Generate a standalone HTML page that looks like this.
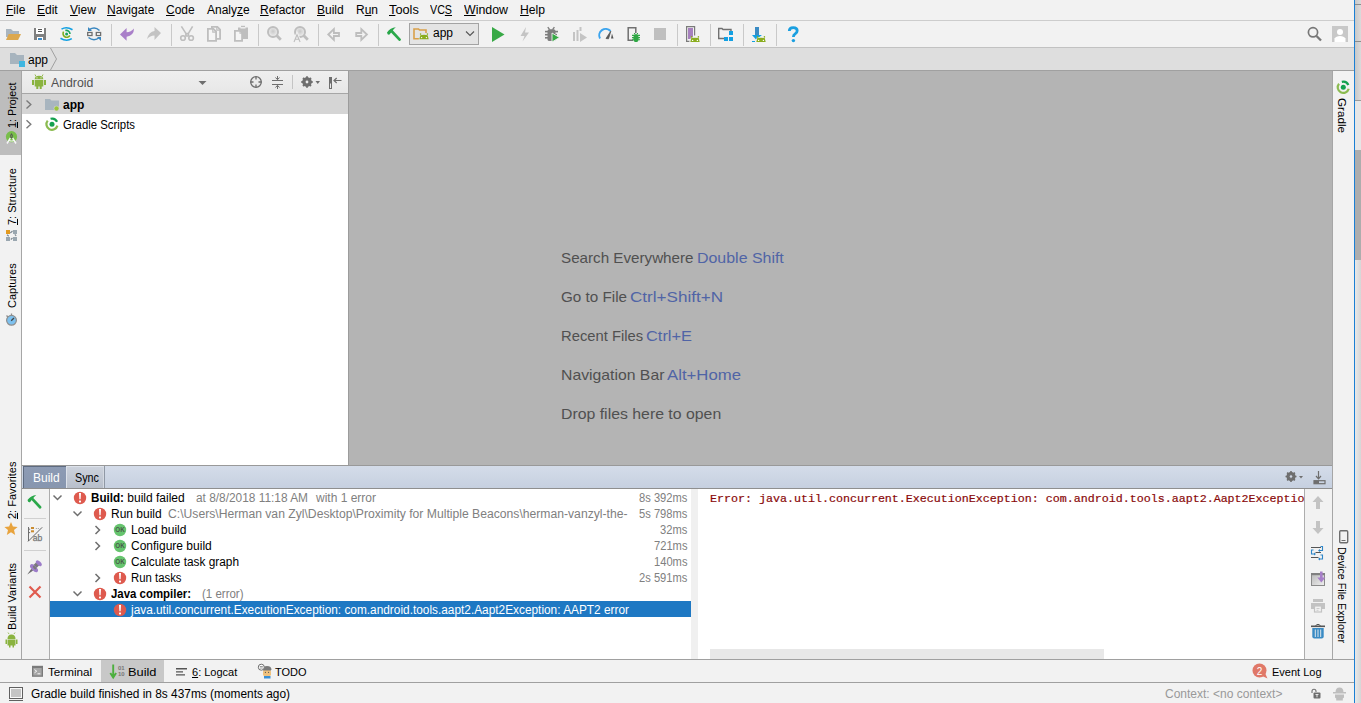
<!DOCTYPE html>
<html><head><meta charset="utf-8">
<style>
*{box-sizing:border-box}
html,body{margin:0;padding:0;width:1361px;height:703px;overflow:hidden;background:#F2F2F2;font-family:"Liberation Sans",sans-serif;font-size:12px;color:#000;position:relative}
.a{position:absolute}
.t{position:absolute;white-space:pre;line-height:12px;font-size:12px}
u{text-decoration:underline;text-underline-offset:1px;text-decoration-thickness:1px}
svg{position:absolute;overflow:visible}
</style></head><body>
<div class="a" style="left:1355px;top:0px;width:6px;height:703px;background:linear-gradient(90deg,#C8C8C8,#DADADA);"></div>
<div class="a" style="left:1355px;top:4px;width:6px;height:1px;background:#8C8C8C;"></div>
<div class="a" style="left:1355px;top:41px;width:6px;height:1px;background:#8C8C8C;"></div>
<div class="a" style="left:1355px;top:100px;width:6px;height:1px;background:#9A9A9A;"></div>
<div class="a" style="left:1355px;top:101px;width:6px;height:49px;background:#E6E6E6;"></div>
<div class="a" style="left:1355px;top:150px;width:6px;height:110px;background:#ADADAD;"></div>
<div class="a" style="left:1355px;top:260px;width:6px;height:443px;background:linear-gradient(90deg,#E8E8E8,#D6D6D6);"></div>
<div class="a" style="left:1354px;top:0px;width:1px;height:703px;background:#1A7FD4;"></div>
<div class="a" style="left:0px;top:20px;width:1354px;height:1px;background:#CDCDCD;"></div>
<span class="t" style="left:6px;top:3.84px;font-size:12px;line-height:12px;"><u>F</u>ile</span>
<span class="t" style="left:37px;top:3.84px;font-size:12px;line-height:12px;"><u>E</u>dit</span>
<span class="t" style="left:70px;top:3.84px;font-size:12px;line-height:12px;"><u>V</u>iew</span>
<span class="t" style="left:107px;top:3.84px;font-size:12px;line-height:12px;"><u>N</u>avigate</span>
<span class="t" style="left:166px;top:3.84px;font-size:12px;line-height:12px;"><u>C</u>ode</span>
<span class="t" style="left:207px;top:3.84px;font-size:12px;line-height:12px;">Analy<u>z</u>e</span>
<span class="t" style="left:260px;top:3.84px;font-size:12px;line-height:12px;"><u>R</u>efactor</span>
<span class="t" style="left:317px;top:3.84px;font-size:12px;line-height:12px;"><u>B</u>uild</span>
<span class="t" style="left:356px;top:3.84px;font-size:12px;line-height:12px;">R<u>u</u>n</span>
<span class="t" style="left:389px;top:3.84px;font-size:12px;line-height:12px;transform:scaleX(1.0638);transform-origin:0 0;"><u>T</u>ools</span>
<span class="t" style="left:430px;top:3.84px;font-size:12px;line-height:12px;transform:scaleX(0.8916);transform-origin:0 0;">VC<u>S</u></span>
<span class="t" style="left:463.5px;top:3.84px;font-size:12px;line-height:12px;transform:scaleX(1.0309);transform-origin:0 0;"><u>W</u>indow</span>
<span class="t" style="left:520px;top:3.84px;font-size:12px;line-height:12px;transform:scaleX(1.0130);transform-origin:0 0;"><u>H</u>elp</span>
<div class="a" style="left:0px;top:47px;width:1354px;height:1px;background:#C2C2C2;"></div>
<svg width="1361" height="703" style="left:0;top:0" viewBox="0 0 1361 703">
<g id="tb">
 <!-- separators -->
 <g fill="#C9C9C9">
  <rect x="111" y="24" width="1" height="22"/><rect x="171" y="24" width="1" height="22"/>
  <rect x="258" y="24" width="1" height="22"/><rect x="318" y="24" width="1" height="22"/>
  <rect x="378" y="24" width="1" height="22"/><rect x="677" y="24" width="1" height="22"/>
  <rect x="710" y="24" width="1" height="22"/><rect x="743" y="24" width="1" height="22"/>
  <rect x="776" y="24" width="1" height="22"/>
 </g>
 <!-- open -->
 <path d="M6 29h5l2 2h6v6H6z" fill="#A9B5BF"/>
 <path d="M8.7 34H21l-2.9 6H6z" fill="#DCA84F"/>
 <!-- save -->
 <rect x="34" y="28" width="12" height="12" fill="#808080"/>
 <rect x="36" y="28" width="8" height="6" fill="#FFFFFF"/>
 <rect x="38" y="29" width="4" height="1" fill="#555"/><rect x="38" y="31" width="4" height="1" fill="#555"/>
 <rect x="37" y="37" width="6" height="3" fill="#FFFFFF"/>
 <rect x="38" y="38" width="4" height="2" fill="#3C8DCB"/>
 <!-- gradle sync -->
 <path d="M61.5 29.2 Q66.5 26 72.5 29.8" stroke="#12A0E3" stroke-width="1.6" fill="none"/>
 <path d="M60.5 38.2 Q66.5 42 71.8 38.6" stroke="#12A0E3" stroke-width="1.6" fill="none"/>
 <path d="M63.6 31.7 A3.6 3.6 0 1 0 69.8 35.5" stroke="#7EAD1E" stroke-width="1.6" fill="none"/>
 <path d="M65.3 30.6 A3.6 3.6 0 0 1 70 34" stroke="#1AA560" stroke-width="1.6" fill="none"/>
 <circle cx="66.6" cy="34" r="1.5" fill="#1AA560"/>
 <!-- sync2 -->
 <path d="M89.5 29.5 Q95 26 99.5 30.5" stroke="#3A87C0" stroke-width="1.5" fill="none"/>
 <path d="M88 27v4h4z" fill="#3A87C0"/>
 <path d="M88.5 37.5 Q94 42 99.5 37.5" stroke="#3A87C0" stroke-width="1.5" fill="none"/>
 <path d="M101 41v-4h-4z" fill="#3A87C0"/>
 <rect x="87.7" y="32.5" width="4.3" height="3" stroke="#6E6E6E" stroke-width="1.3" fill="#fff"/>
 <rect x="96.3" y="32.5" width="4.3" height="3" stroke="#6E6E6E" stroke-width="1.3" fill="#fff"/>
 <!-- undo -->
 <path d="M120 34.6 L126.6 28 V32.3 Q131 32 134 28.5 Q134 35.5 126.6 36.8 V40.7 Z" fill="#A97FC9"/>
 <!-- redo -->
 <path d="M161 33 L154.5 27 V31 Q149 31.5 147 39 Q150 35.5 154.5 35.5 V40 Z" fill="#C3C3C3"/>
 <!-- cut -->
 <g stroke="#BEBEBE" stroke-width="1.6" fill="none">
  <path d="M181.4 26.4 L185.9 33.4 V36.4 M192.6 26.4 L188.4 33.4 V36.4 M185.9 33.6 H188.4 M185.9 36 H188.4"/>
  <circle cx="183" cy="38" r="2.3"/><circle cx="191.1" cy="38" r="2.3"/>
 </g>
 <!-- copy -->
 <path d="M211.9 26.9 H217.4 L220.1 29.6 V38.9 H211.9Z" fill="#F5F5F5" stroke="#BEBEBE" stroke-width="1.8"/>
 <path d="M207.9 28.9 H213.4 L216.1 31.6 V40.9 H207.9Z" fill="#F5F5F5" stroke="#BEBEBE" stroke-width="1.8"/>
 <path d="M212.8 29 V32.2 H216" fill="none" stroke="#BEBEBE" stroke-width="1.2"/>
 <path d="M216.8 27 V30.2 H220" fill="none" stroke="#BEBEBE" stroke-width="1.2"/>
 <!-- paste -->
 <path d="M238 27.5 H240.5 V28.5 H245.5 V27.5 H248 V39 H238Z" fill="#BEBEBE"/>
 <rect x="241" y="25.8" width="4" height="1.3" fill="#BEBEBE"/>
 <path d="M234.9 30.9 H240.4 L242.1 32.6 V40.9 H234.9Z" fill="#F5F5F5" stroke="#BEBEBE" stroke-width="1.8"/>
 <path d="M240 31 V33.2 H242" fill="none" stroke="#BEBEBE" stroke-width="1.1"/>
 <!-- find -->
 <defs><radialGradient id="lens" cx="0.5" cy="0.45" r="0.5"><stop offset="0" stop-color="#C8C8C8"/><stop offset="1" stop-color="#EEEEEE"/></radialGradient></defs>
 <circle cx="273" cy="31.9" r="5" fill="url(#lens)" stroke="#BEBEBE" stroke-width="2"/>
 <path d="M276.7 35.6 L280.8 39.7" stroke="#BEBEBE" stroke-width="2.8"/>
 <!-- replace -->
 <circle cx="300" cy="31.9" r="5" fill="url(#lens)" stroke="#BEBEBE" stroke-width="2"/>
 <path d="M303.7 35.6 L307.8 39.7" stroke="#BEBEBE" stroke-width="2.8"/>
 <path d="M294 42 L297 34.7 L300.1 42" stroke="#F2F2F2" stroke-width="3" fill="none"/>
 <path d="M294 42 L297 34.7 L300.1 42 M295.2 39.3 h3.7" stroke="#BEBEBE" stroke-width="1.1" fill="none"/>
 <!-- back -->
 <path d="M328.3 34.5 L333.9 29.2 V33 H339 V36 H333.9 V39.8Z" fill="none" stroke="#BEBEBE" stroke-width="1.8" stroke-linejoin="miter"/>
 <!-- fwd -->
 <path d="M366.9 34.5 L361.3 29.2 V33 H356.2 V36 H361.3 V39.8Z" fill="none" stroke="#BEBEBE" stroke-width="1.8" stroke-linejoin="miter"/>
 <!-- hammer -->
 <path d="M387 32.5 Q390.5 27.5 395.8 27.3 Q393.5 29 391.4 32.2 L389.5 34.6 Q387.5 35.2 387 32.5Z" fill="#27A648"/>
 <path d="M391.3 30.8 L399.6 39.6" stroke="#2BA84A" stroke-width="2.7" stroke-linecap="round"/>
 <!-- dropdown box -->
 <rect x="409.5" y="23.5" width="69" height="21" fill="#E4E4E4" stroke="#A3A3A3" stroke-width="1"/>
 <path d="M419 38.7H414V29h4.5l1 1H426v3" fill="none" stroke="#D9A04A" stroke-width="1.6"/>
 <g transform="translate(-271 -2.8)">
 <path d="M689.6 42.2 L690.8 37.6 Q695 36.4 699.2 37.6 L700.4 42.2Z" fill="#E4E4E4"/>
 <path d="M690.3 42 L691.3 38.1 Q695 37.2 698.7 38.1 L699.7 42Z" fill="#8AAD1E"/>
 <circle cx="691.6" cy="36.9" r="0.8" fill="#8AAD1E"/><circle cx="698.4" cy="36.9" r="0.8" fill="#8AAD1E"/>
 <circle cx="692.6" cy="40.4" r="0.7" fill="#fff"/><circle cx="697.4" cy="40.4" r="0.7" fill="#fff"/></g>
 <path d="M466 31.5 L470 35.5 L474 31.5" stroke="#555" stroke-width="1.1" fill="none"/>
 <!-- run -->
 <path d="M492 27 L504.5 34.5 L492 42Z" fill="#38A946"/>
 <!-- lightning -->
 <path d="M526 27 L520.5 36 H524.5 L522.5 41.5 L529 32.5 H525Z" fill="#C4C4C4"/>
 <!-- debug -->
 <g fill="#7E7E7E">
 <path d="M547.5 31 Q547.5 29.3 549.5 29.3 H553.5 Q555.5 29.3 555.5 31 V39.5 Q555.5 41 553.5 41 H549.5 Q547.5 41 547.5 39.5Z"/>
 <rect x="545" y="30.8" width="3" height="1.6"/><rect x="545" y="33.9" width="3" height="1.6"/><rect x="545" y="37" width="3" height="1.6"/>
 <rect x="555" y="30.8" width="3" height="1.6"/><rect x="555" y="33.9" width="2" height="1.6"/>
 </g>
 <path d="M547.8 27.2 L549.6 29.6 M554.4 27.2 L552.6 29.6" stroke="#7E7E7E" stroke-width="1.4"/>
 <path d="M552 33 L559.5 37.5 L552 42Z" fill="#38A946" stroke="#F2F2F2" stroke-width="0.9"/>
 <!-- attach -->
 <g fill="#C4C4C4"><rect x="573" y="32" width="2" height="9"/><rect x="576.5" y="30" width="2" height="11"/><rect x="579.5" y="27" width="2" height="4"/>
 <path d="M580 33 L587 37.5 L580 42Z"/></g>
 <!-- profile -->
 <path d="M600 38.5 A6.5 6.5 0 0 1 610.5 31" stroke="#3BA4EE" stroke-width="2" fill="none"/>
 <path d="M606 38.5 L610.8 31.2 L608.5 38.8Z" fill="#555" stroke="#555" stroke-width="0.8"/>
 <path d="M612 33.5 L613.5 38.5 H611Z" fill="#555"/>
 <!-- attach debugger device -->
 <path d="M633.2 40.2 H628.2 V27.8 H635.8 V33.2" fill="none" stroke="#707070" stroke-width="1.5"/>
 <g fill="#2FA744"><ellipse cx="636" cy="38.2" rx="2.6" ry="3.9"/></g>
 <path d="M632 35.4 h8 M632 37.6 h8 M632 39.7 h8" stroke="#2FA744" stroke-width="1.1"/>
 <path d="M634.2 33 l0.9 1.6 M637.8 33 l-0.9 1.6" stroke="#2FA744" stroke-width="1"/>
 <!-- stop -->
 <rect x="654" y="28" width="12" height="12" fill="#BFBFBF"/>
 <!-- AVD -->
 <path d="M689.5 41.3 H686.6 V26.6 H694.6 V35.5" fill="none" stroke="#7A7A7A" stroke-width="1.2"/>
 <rect x="688" y="28" width="5" height="11" fill="#A680BE"/>
 <path d="M689.6 42.2 L690.8 37.6 Q695 36.4 699.2 37.6 L700.4 42.2Z" fill="#F2F2F2"/>
 <path d="M690.3 42 L691.3 38.1 Q695 37.2 698.7 38.1 L699.7 42Z" fill="#8AAD1E"/>
 <circle cx="691.6" cy="36.9" r="0.8" fill="#8AAD1E"/><circle cx="698.4" cy="36.9" r="0.8" fill="#8AAD1E"/>
 <circle cx="692.6" cy="40.4" r="0.7" fill="#fff"/><circle cx="697.4" cy="40.4" r="0.7" fill="#fff"/>
 <!-- project structure -->
 <path d="M724 38.5 H718.7 V28.5 H722 L723 29.5 H731 V31" fill="none" stroke="#707070" stroke-width="1.4"/>
 <g fill="#12A0E3"><rect x="729" y="31" width="4" height="4"/><rect x="724" y="37" width="4" height="4"/><rect x="729" y="37" width="4" height="4"/></g>
 <!-- sdk -->
 <rect x="755" y="27" width="4" height="8" fill="#3A8BC4"/>
 <path d="M752 35 H762 L756 39.5Z" fill="#12A0E3"/>
 <rect x="752" y="41" width="3" height="1" fill="#12A0E3"/>
 <g transform="translate(66 0)">
 <path d="M689.6 42.2 L690.8 37.6 Q695 36.4 699.2 37.6 L700.4 42.2Z" fill="#F2F2F2"/>
 <path d="M690.3 42 L691.3 38.1 Q695 37.2 698.7 38.1 L699.7 42Z" fill="#8AAD1E"/>
 <circle cx="691.6" cy="36.9" r="0.8" fill="#8AAD1E"/><circle cx="698.4" cy="36.9" r="0.8" fill="#8AAD1E"/>
 <circle cx="692.6" cy="40.4" r="0.7" fill="#fff"/><circle cx="697.4" cy="40.4" r="0.7" fill="#fff"/></g>
 <!-- help -->
 <path d="M789.3 31 Q789.3 27.6 793.2 27.6 Q797.2 27.6 797.2 30.8 Q797.2 32.8 795 34 Q793.4 34.8 793.4 37" fill="none" stroke="#1A9FE0" stroke-width="2.8"/>
 <circle cx="793.4" cy="40.6" r="1.7" fill="#1A9FE0"/>
 <!-- search right -->
 <circle cx="1313" cy="32.3" r="4.6" fill="none" stroke="#777" stroke-width="1.7"/>
 <path d="M1316.5 36 L1321 40.5" stroke="#777" stroke-width="2.3"/>
 <!-- user -->
 <rect x="1332" y="26" width="16" height="16" fill="#C8C8C8"/>
 <circle cx="1340" cy="32" r="3" fill="#fff"/>
 <path d="M1334.5 42 V38.5 Q1336 36 1340 36 Q1344 36 1345.5 38.5 V42Z" fill="#fff"/>
</g>
</svg>
<span class="t" style="left:433px;top:26.84px;font-size:12px;line-height:12px;">app</span>
<div class="a" style="left:0px;top:48px;width:1354px;height:22px;background:#DEDEDE;"></div>
<div class="a" style="left:0px;top:70px;width:1354px;height:1px;background:#A0A0A0;"></div>
<svg width="60" height="24" style="left:0;top:47px" viewBox="0 47 60 24">
<path d="M10 53h5l2 2h7v9H10z" fill="#A7B4BE"/>
<rect x="19" y="61" width="6" height="6" fill="#40B6E0" stroke="#DEDEDE" stroke-width="0"/>
<path d="M50.5 48 L56.5 59 L50.5 70" fill="none" stroke="#A0A0A0" stroke-width="1"/>
</svg>
<span class="t" style="left:28px;top:53.84px;font-size:12px;line-height:12px;">app</span>
<div class="a" style="left:0px;top:71px;width:21px;height:84px;background:#BDBDBD;"></div>
<div class="a" style="left:21px;top:71px;width:1px;height:588px;background:#A6A6A6;"></div>
<span class="t" style="left:7.09px;top:128px;transform:rotate(-90deg) scaleX(0.9792);transform-origin:0 0;font-size:11px;line-height:11px;"><u>1</u>: Project</span>
<span class="t" style="left:6.99px;top:225px;transform:rotate(-90deg);transform-origin:0 0;font-size:11px;line-height:11px;"><u>7</u>: Structure</span>
<span class="t" style="left:6.99px;top:308px;transform:rotate(-90deg);transform-origin:0 0;font-size:11px;line-height:11px;">Captures</span>
<span class="t" style="left:6.99px;top:519px;transform:rotate(-90deg);transform-origin:0 0;font-size:11px;line-height:11px;"><u>2</u>: Favorites</span>
<span class="t" style="left:6.99px;top:630px;transform:rotate(-90deg);transform-origin:0 0;font-size:11px;line-height:11px;">Build Variants</span>
<svg width="22" height="600" style="left:0;top:60px" viewBox="0 60 22 600">
<circle cx="11.5" cy="136.7" r="5.6" fill="#78BE4A"/>
<path d="M10.4 137.8 L7 143.5 M12.6 137.8 L16 143.5" stroke="#F5F5F5" stroke-width="1.5"/>
<path d="M8.7 140.2 Q11.5 141.9 14.3 140.2" stroke="#F5F5F5" stroke-width="1.1" fill="none"/>
<path d="M11.5 133 L12.9 135.4 L12.3 138.2 H10.7 L10.1 135.4Z" fill="#555"/>
<circle cx="11.5" cy="136" r="0.7" fill="#78BE4A"/>
<rect x="6" y="230" width="4" height="4" fill="#E39A1F"/>
<g fill="#9AA7B0"><rect x="13" y="230" width="4" height="4"/><rect x="6" y="237" width="4" height="4"/><rect x="13" y="237" width="4" height="4"/></g>
<path d="M10.3 233 L12.5 231 M7 234.8 L8.8 236.2 M14.8 234.3 L16.2 235.8 M10.8 239.5 L12.5 238" stroke="#7A8690" stroke-width="1.1"/>
<circle cx="11.5" cy="320.3" r="4.9" fill="#7DC1EF" stroke="#8E8E8E" stroke-width="1.2"/>
<path d="M11.2 320.8 L14 318" stroke="#444" stroke-width="1.3"/>
<path d="M6.5 315.5 L8 317 M11.5 313.5 v2" stroke="#8C8C8C" stroke-width="1.3"/>
<path d="M11 522 L12.9 526.6 L17.6 526.9 L14 530.1 L15.2 535 L11 532.3 L6.8 535 L8 530.1 L4.4 526.9 L9.1 526.6Z" fill="#E8A33D"/>
<path d="M7.5 639 Q7.5 634.5 11.5 634.5 Q15.5 634.5 15.5 639Z" fill="#8AB33F"/>
<rect x="7.5" y="639.5" width="8" height="6" fill="#8AB33F"/><rect x="5.5" y="639.5" width="1.5" height="4.5" fill="#8AB33F"/><rect x="16" y="639.5" width="1.5" height="4.5" fill="#8AB33F"/>
<rect x="9" y="645" width="1.5" height="2.5" fill="#8AB33F"/><rect x="12.5" y="645" width="1.5" height="2.5" fill="#8AB33F"/>
<path d="M9 634 L8 632.5 M14 634 L15 632.5" stroke="#8AB33F" stroke-width="0.8"/>
</svg>
<div class="a" style="left:22px;top:71px;width:326px;height:22px;background:linear-gradient(#EFEFEF,#E7E7E7);"></div>
<div class="a" style="left:22px;top:93px;width:326px;height:1px;background:#A6A6A6;"></div>
<div class="a" style="left:22px;top:94px;width:326px;height:371px;background:#FFFFFF;"></div>
<div class="a" style="left:22px;top:94px;width:326px;height:20px;background:#D5D5D5;"></div>
<div class="a" style="left:348px;top:71px;width:1px;height:394px;background:#9C9C9C;"></div>
<span class="t" style="left:51px;top:76.84px;font-size:12px;line-height:12px;color:#505050;transform:scaleX(1.0227);transform-origin:0 0;">Android</span>
<span class="t" style="left:63px;top:98.84px;font-size:12px;line-height:12px;font-weight:700;">app</span>
<span class="t" style="left:63px;top:118.84px;font-size:12px;line-height:12px;transform:scaleX(0.9471);transform-origin:0 0;">Gradle Scripts</span>
<svg width="326" height="64" style="left:22px;top:71px" viewBox="22 71 326 64">
<g fill="#8AB33F">
<path d="M34.7 79.3 Q34.7 75.8 39 75.8 Q43.3 75.8 43.3 79.3Z"/>
<rect x="34.7" y="80" width="8.6" height="6.5"/><rect x="32" y="80" width="2" height="5"/><rect x="44" y="80" width="2" height="5"/>
<rect x="36.3" y="86" width="2" height="3"/><rect x="39.7" y="86" width="2" height="3"/>
</g>
<path d="M36 76.5 L35 74.5 M42 76.5 L43 74.5" stroke="#8AB33F" stroke-width="0.9"/>
<circle cx="37" cy="77.8" r="0.6" fill="#EFEFEF"/><circle cx="41" cy="77.8" r="0.6" fill="#EFEFEF"/>
<path d="M198.5 81 h8 l-4 4z" fill="#6E6E6E"/>
<circle cx="256" cy="82" r="5.3" fill="none" stroke="#6E6E6E" stroke-width="1.3"/>
<path d="M256 76.5 v3 M256 84.5 v3 M250.5 82 h3 M258.5 82 h3" stroke="#6E6E6E" stroke-width="1.3"/>
<path d="M272 80.5 h11 M272 84.5 h11 M277.5 76 v3.5 M277.5 85.5 v3.5" stroke="#6E6E6E" stroke-width="1"/>
<path d="M275.5 77.5 L277.5 79.7 L279.5 77.5 M275.5 87.5 L277.5 85.3 L279.5 87.5" stroke="#6E6E6E" stroke-width="1" fill="none"/>
<rect x="292" y="75" width="1" height="14" fill="#C4C4C4"/>
<circle cx="307" cy="82" r="3.6" fill="none" stroke="#6E6E6E" stroke-width="2.4"/>
<path d="M307 76.3 v11.4 M301.3 82 h11.4 M303 78 l8 8 M311 78 l-8 8" stroke="#6E6E6E" stroke-width="1.8"/>
<circle cx="307" cy="82" r="1.4" fill="#EBEBEB"/>
<path d="M315.5 81 h4.5 l-2.25 3z" fill="#6E6E6E"/>
<rect x="329.5" y="77.5" width="2" height="11" fill="none" stroke="#6E6E6E" stroke-width="1"/>
<rect x="329.5" y="77.5" width="2" height="6" fill="#6E6E6E"/>
<path d="M334 80.5 h7.5 M336.7 78 L334 80.5 L336.7 83" stroke="#6E6E6E" stroke-width="1.2" fill="none"/>
<path d="M26.5 100.5 L30.8 104.5 L26.5 108.5 M26.5 120.3 L30.8 124.3 L26.5 128.3" stroke="#7A7A7A" stroke-width="1.4" fill="none"/>
<path d="M45 99 h5 l1.5 1.5 H59 V110 H45z" fill="#A8B5BF"/>
<circle cx="56.5" cy="108.5" r="2.8" fill="#D5D5D5"/>
<circle cx="56.5" cy="108.5" r="2.2" fill="#9BC53D"/>
<path d="M47.71 120.60 A5.6 5.6 0 1 0 57.41 125.65" stroke="#8BBB50" stroke-width="2.2" fill="none"/>
<path d="M50.55 118.79 A5.6 5.6 0 0 1 57.08 121.83" stroke="#14A14F" stroke-width="2.2" fill="none"/>
<circle cx="52" cy="124.2" r="2.5" fill="#14A14F"/>
</svg>
<div class="a" style="left:349px;top:71px;width:983px;height:394px;background:#B4B4B4;"></div>
<span class="t" style="left:560.6px;top:250.30px;font-size:15px;line-height:15px;color:#505050;transform:scaleX(1.0123);transform-origin:0 0;">Search Everywhere</span>
<span class="t" style="left:696.5px;top:250.30px;font-size:15px;line-height:15px;color:#5064A6;transform:scaleX(1.0622);transform-origin:0 0;">Double Shift</span>
<span class="t" style="left:560.5px;top:289.30px;font-size:15px;line-height:15px;color:#505050;transform:scaleX(1.0150);transform-origin:0 0;">Go to File</span>
<span class="t" style="left:630.2px;top:289.30px;font-size:15px;line-height:15px;color:#5064A6;transform:scaleX(1.1384);transform-origin:0 0;">Ctrl+Shift+N</span>
<span class="t" style="left:560.6px;top:328.30px;font-size:15px;line-height:15px;color:#505050;transform:scaleX(0.9848);transform-origin:0 0;">Recent Files</span>
<span class="t" style="left:646.2px;top:328.30px;font-size:15px;line-height:15px;color:#5064A6;transform:scaleX(1.0928);transform-origin:0 0;">Ctrl+E</span>
<span class="t" style="left:560.6px;top:367.30px;font-size:15px;line-height:15px;color:#505050;transform:scaleX(1.0510);transform-origin:0 0;">Navigation Bar</span>
<span class="t" style="left:667.1px;top:367.30px;font-size:15px;line-height:15px;color:#5064A6;transform:scaleX(1.1165);transform-origin:0 0;">Alt+Home</span>
<span class="t" style="left:560.6px;top:406.30px;font-size:15px;line-height:15px;color:#505050;transform:scaleX(1.0556);transform-origin:0 0;">Drop files here to open</span>
<div class="a" style="left:1332px;top:71px;width:1px;height:588px;background:#A6A6A6;"></div>
<span class="t" style="left:1346.81px;top:98px;transform:rotate(90deg) scaleX(1.0601);transform-origin:0 0;font-size:11px;line-height:11px;">Gradle</span>
<span class="t" style="left:1346.81px;top:547px;transform:rotate(90deg) scaleX(0.9754);transform-origin:0 0;font-size:11px;line-height:11px;">Device File Explorer</span>
<svg width="22" height="600" style="left:1333px;top:60px" viewBox="1333 60 22 600">
<path d="M1339.01 83.70 A5.6 5.6 0 1 0 1348.71 88.75" stroke="#8BBB50" stroke-width="2.2" fill="none"/>
<path d="M1341.85 81.89 A5.6 5.6 0 0 1 1348.38 84.93" stroke="#14A14F" stroke-width="2.2" fill="none"/>
<circle cx="1343.3" cy="87.3" r="2.5" fill="#14A14F"/>
<rect x="1339.7" y="530.7" width="8" height="12" rx="1" fill="none" stroke="#6E6E6E" stroke-width="1.4"/>
<rect x="1341.5" y="540" width="4" height="1" fill="#6E6E6E"/>
</svg>
<div class="a" style="left:22px;top:465px;width:1310px;height:1px;background:#999999;"></div>
<div class="a" style="left:22px;top:466px;width:1310px;height:22px;background:linear-gradient(#D4DCE9,#C6D0E0);"></div>
<div class="a" style="left:23px;top:466px;width:43px;height:22px;background:linear-gradient(#8D9BB4,#8796AF);box-shadow:inset 1px 1px 0 #5E6B80"></div>
<div class="a" style="left:66px;top:466px;width:39px;height:22px;background:linear-gradient(#CDD3DD,#B8BFCB);border-right:1px solid #8F98A5;box-shadow:inset 1px 1px 0 #DDE2EA,inset -1px 0 0 #D5DAE2"></div>
<span class="t" style="left:33px;top:471.84px;font-size:12px;line-height:12px;color:#FFFFFF;">Build</span>
<span class="t" style="left:75px;top:471.84px;font-size:12px;line-height:12px;transform:scaleX(0.8996);transform-origin:0 0;">Sync</span>
<div class="a" style="left:22px;top:488px;width:1310px;height:1px;background:#8F8F8F;"></div>
<div class="a" style="left:22px;top:489px;width:27px;height:170px;background:#F2F2F2;"></div>
<div class="a" style="left:49px;top:489px;width:1px;height:170px;background:#ADADAD;"></div>
<div class="a" style="left:50px;top:489px;width:641px;height:170px;background:#FFFFFF;"></div>
<div class="a" style="left:691px;top:489px;width:7px;height:170px;background:#F0F0F0;"></div>
<div class="a" style="left:698px;top:489px;width:606px;height:170px;background:#FFFFFF;"></div>
<div class="a" style="left:1304px;top:489px;width:1px;height:170px;background:#ADADAD;"></div>
<div class="a" style="left:1305px;top:489px;width:27px;height:170px;background:#F2F2F2;"></div>
<div class="a" style="left:50px;top:601px;width:641px;height:16px;background:#1E78C3;"></div>
<div class="a" style="left:710px;top:649px;width:394px;height:10px;background:#E8E8E8;"></div>
<div class="a" style="left:24px;top:518px;width:22px;height:1px;background:#D0D0D0;"></div>
<div class="a" style="left:24px;top:550px;width:22px;height:1px;background:#D0D0D0;"></div>
<span class="t" style="left:91px;top:491.84px;font-size:12px;line-height:12px;font-weight:700;transform:scaleX(0.9709);transform-origin:0 0;">Build:</span>
<span class="t" style="left:124px;top:491.84px;font-size:12px;line-height:12px;"> build failed</span>
<span class="t" style="left:196px;top:491.84px;font-size:12px;line-height:12px;color:#808080;transform:scaleX(0.9894);transform-origin:0 0;">at 8/8/2018 11:18 AM</span>
<span class="t" style="left:316px;top:491.84px;font-size:12px;line-height:12px;color:#808080;">with 1 error</span>
<span class="t" style="left:639.12px;top:491.84px;font-size:12px;line-height:12px;color:#808080;transform:scaleX(0.9300);transform-origin:0 0;">8s 392ms</span>
<span class="t" style="left:111px;top:507.84px;font-size:12px;line-height:12px;">Run build</span>
<span class="t" style="left:168px;top:507.84px;font-size:12px;line-height:12px;color:#808080;transform:scaleX(1.0133);transform-origin:0 0;">C:\Users\Herman van Zyl\Desktop\Proximity for Multiple Beacons\herman-vanzyl-the-</span>
<span class="t" style="left:639.12px;top:507.84px;font-size:12px;line-height:12px;color:#808080;transform:scaleX(0.9300);transform-origin:0 0;">5s 798ms</span>
<span class="t" style="left:131px;top:523.84px;font-size:12px;line-height:12px;">Load build</span>
<span class="t" style="left:660.21px;top:523.84px;font-size:12px;line-height:12px;color:#808080;transform:scaleX(0.9300);transform-origin:0 0;">32ms</span>
<span class="t" style="left:131px;top:539.84px;font-size:12px;line-height:12px;">Configure build</span>
<span class="t" style="left:654.0px;top:539.84px;font-size:12px;line-height:12px;color:#808080;transform:scaleX(0.9300);transform-origin:0 0;">721ms</span>
<span class="t" style="left:131px;top:555.84px;font-size:12px;line-height:12px;transform:scaleX(0.9873);transform-origin:0 0;">Calculate task graph</span>
<span class="t" style="left:654.0px;top:555.84px;font-size:12px;line-height:12px;color:#808080;transform:scaleX(0.9300);transform-origin:0 0;">140ms</span>
<span class="t" style="left:131px;top:571.84px;font-size:12px;line-height:12px;transform:scaleX(0.9465);transform-origin:0 0;">Run tasks</span>
<span class="t" style="left:639.12px;top:571.84px;font-size:12px;line-height:12px;color:#808080;transform:scaleX(0.9300);transform-origin:0 0;">2s 591ms</span>
<span class="t" style="left:111px;top:587.84px;font-size:12px;line-height:12px;font-weight:700;transform:scaleX(0.9519);transform-origin:0 0;">Java compiler:</span>
<span class="t" style="left:202px;top:587.84px;font-size:12px;line-height:12px;color:#808080;transform:scaleX(0.9576);transform-origin:0 0;">(1 error)</span>
<span class="t" style="left:131px;top:603.84px;font-size:12px;line-height:12px;color:#FFFFFF;transform:scaleX(0.9875);transform-origin:0 0;">java.util.concurrent.ExecutionException: com.android.tools.aapt2.Aapt2Exception: AAPT2 error</span>
<svg width="700" height="200" style="left:0;top:480px" viewBox="0 480 700 200">
<path d="M53.5 495.5 L57.5 499.5 L61.5 495.5" stroke="#6E6E6E" stroke-width="1.5" fill="none"/>
<circle cx="80" cy="498" r="6.2" fill="#DE5A4E"/>
<path d="M79 493 h2 l-0.4 6.2 h-1.2z" fill="#fff"/><rect x="79" y="500.6" width="2" height="1.8" fill="#fff"/>
<path d="M73.5 511.5 L77.5 515.5 L81.5 511.5" stroke="#6E6E6E" stroke-width="1.5" fill="none"/>
<circle cx="100" cy="514" r="6.2" fill="#DE5A4E"/>
<path d="M99 509 h2 l-0.4 6.2 h-1.2z" fill="#fff"/><rect x="99" y="516.6" width="2" height="1.8" fill="#fff"/>
<path d="M95.5 526 L99.5 530 L95.5 534" stroke="#6E6E6E" stroke-width="1.5" fill="none"/>
<circle cx="120" cy="530" r="6.2" fill="#66C46E"/>
<text x="120" y="532.3" text-anchor="middle" font-family="Liberation Sans" font-weight="700" font-size="6.3" fill="#4A5A4A">OK</text>
<path d="M95.5 542 L99.5 546 L95.5 550" stroke="#6E6E6E" stroke-width="1.5" fill="none"/>
<circle cx="120" cy="546" r="6.2" fill="#66C46E"/>
<text x="120" y="548.3" text-anchor="middle" font-family="Liberation Sans" font-weight="700" font-size="6.3" fill="#4A5A4A">OK</text>
<circle cx="120" cy="562" r="6.2" fill="#66C46E"/>
<text x="120" y="564.3" text-anchor="middle" font-family="Liberation Sans" font-weight="700" font-size="6.3" fill="#4A5A4A">OK</text>
<path d="M95.5 574 L99.5 578 L95.5 582" stroke="#6E6E6E" stroke-width="1.5" fill="none"/>
<circle cx="120" cy="578" r="6.2" fill="#DE5A4E"/>
<path d="M119 573 h2 l-0.4 6.2 h-1.2z" fill="#fff"/><rect x="119" y="580.6" width="2" height="1.8" fill="#fff"/>
<path d="M73.5 591.5 L77.5 595.5 L81.5 591.5" stroke="#6E6E6E" stroke-width="1.5" fill="none"/>
<circle cx="100" cy="594" r="6.2" fill="#DE5A4E"/>
<path d="M99 589 h2 l-0.4 6.2 h-1.2z" fill="#fff"/><rect x="99" y="596.6" width="2" height="1.8" fill="#fff"/>
<circle cx="120" cy="610" r="6.2" fill="#DE5A4E"/>
<path d="M119 605 h2 l-0.4 6.2 h-1.2z" fill="#fff"/><rect x="119" y="612.6" width="2" height="1.8" fill="#fff"/>
</svg>
<svg width="28" height="170" style="left:22px;top:489px" viewBox="22 489 28 170">
<g transform="translate(-359.5 467.6)"><path d="M387 32.5 Q390.5 27.5 395.8 27.3 Q393.5 29 391.4 32.2 L389.5 34.6 Q387.5 35.2 387 32.5Z" fill="#27A648"/>
<path d="M391.3 30.8 L399.6 39.6" stroke="#2BA84A" stroke-width="2.7" stroke-linecap="round"/></g>
<path d="M28.5 527 v14 M28.5 529.2 h1.6 M28.5 532.6 h1.6" stroke="#6E6E6E" stroke-width="1" fill="none"/>
<g fill="#C98B2F"><rect x="31" y="527" width="3" height="2"/><rect x="31" y="530.3" width="3" height="2"/></g>
<circle cx="36.3" cy="528.5" r="0.55" fill="#888"/><circle cx="38.3" cy="528.5" r="0.55" fill="#888"/>
<path d="M28 541.5 L42.2 527.3" stroke="#555" stroke-width="0.9"/>
<text x="32.8" y="541.3" font-family="Liberation Sans" font-size="8.6" fill="#777" stroke="#777" stroke-width="0.25">ab</text>
<path d="M27.3 574.5 L31.3 568.8 L33.2 570.5 Z" fill="#6E6E6E"/>
<path d="M33 565.5 L36.5 562 L39.5 565 L36 568.5Z" fill="#7A7A7A"/>
<ellipse cx="34" cy="568.2" rx="5" ry="2.4" transform="rotate(45 34 568.2)" fill="#9D7DC9"/>
<ellipse cx="34.6" cy="567.6" rx="2.2" ry="1.1" transform="rotate(45 34.6 567.6)" fill="#7A7A7A"/>
<ellipse cx="38.8" cy="563.2" rx="3.6" ry="2" transform="rotate(45 38.8 563.2)" fill="#9D7DC9"/>
<path d="M29.5 586.5 L40.5 597.5 M40.5 586.5 L29.5 597.5" stroke="#E05B4F" stroke-width="2.2"/>
</svg>
<span class="t" style="left:710px;top:493.75px;font-size:11.67px;line-height:11.67px;color:#8A0A0A;font-family:'Liberation Mono',monospace;-webkit-text-stroke:0.2px #8A0A0A;">Error: java.util.concurrent.ExecutionException: com.android.tools.aapt2.Aapt2Exceptio</span>
<svg width="28" height="170" style="left:1305px;top:489px" viewBox="1305 489 28 170">
<path d="M1318 496 L1323.5 502 H1320 V509 H1316 V502 H1312.5Z" fill="#C3C3C3"/>
<path d="M1318 534 L1323.5 528 H1320 V521 H1316 V528 H1312.5Z" fill="#C3C3C3"/>
<path d="M1311 547.5 h10 M1315.5 552.5 h5.5 M1311 557.5 h7.5" stroke="#555" stroke-width="1"/>
<path d="M1320.5 546.5 h2 v4 h-3" stroke="#2E86C8" stroke-width="1.1" fill="none"/><path d="M1318 550.5 l2 -1.6 v3.2z" fill="#2E86C8"/>
<path d="M1313.5 550 h-2 v4 h3" stroke="#2E86C8" stroke-width="1.1" fill="none"/><path d="M1316 554 l-2 -1.6 v3.2z" fill="#2E86C8"/>
<path d="M1320.5 555 h2 v4 h-3" stroke="#2E86C8" stroke-width="1.1" fill="none"/><path d="M1318 559 l2 -1.6 v3.2z" fill="#2E86C8"/>
<defs><linearGradient id="sg" x1="0" y1="0" x2="1" y2="1"><stop offset="0" stop-color="#B8B8B8"/><stop offset="1" stop-color="#F0F0F0"/></linearGradient></defs>
<rect x="1311.5" y="573.5" width="13" height="12" fill="url(#sg)" stroke="#8A8A8A" stroke-width="1"/>
<rect x="1311" y="573" width="14" height="2.2" fill="#808080"/>
<path d="M1321.3 571.5 v7" stroke="#A77FC9" stroke-width="2.6"/>
<path d="M1317.3 577.5 h8 l-4 5z" fill="#A77FC9"/>
<g fill="#C3C3C3"><rect x="1313" y="599" width="10" height="3"/><rect x="1311" y="603" width="14" height="6"/></g>
<rect x="1314.5" y="606" width="7" height="6" fill="#F2F2F2" stroke="#C3C3C3" stroke-width="1.2"/>
<path d="M1316.5 608.5 h3 M1316.5 610.3 h2" stroke="#C3C3C3" stroke-width="0.8"/>
<path d="M1315.5 625.5 q2.5 -2.5 5 0" stroke="#555" stroke-width="1" fill="none"/>
<rect x="1311" y="625.5" width="14" height="1.6" fill="#555"/>
<path d="M1312.3 628 h11.4 v8.5 q0 2 -2 2 h-7.4 q-2 0 -2 -2z" fill="#3A8BC4"/>
<path d="M1315.3 629.5 v7.5 M1318 629.5 v7.5 M1320.7 629.5 v7.5" stroke="#F2F2F2" stroke-width="0.9"/>
</svg>
<svg width="30" height="24" style="left:1276px;top:465px" viewBox="1276 465 30 24">
<circle cx="1291" cy="476.5" r="3.5" fill="none" stroke="#6E6E6E" stroke-width="2.2"/>
<path d="M1291 471 v11 M1285.5 476.5 h11 M1287.1 472.6 l7.8 7.8 M1294.9 472.6 l-7.8 7.8" stroke="#6E6E6E" stroke-width="1.6"/>
<circle cx="1291" cy="476.5" r="1.3" fill="#CFD7E5"/>
<path d="M1299 476 h4 l-2 2.5z" fill="#6E6E6E"/>
</svg>
<svg width="20" height="24" style="left:1310px;top:465px" viewBox="1310 465 20 24">
<path d="M1318.5 471 v7.5 M1316 476 L1318.5 478.8 L1321 476" stroke="#6E6E6E" stroke-width="1.2" fill="none"/>
<rect x="1314" y="480.7" width="11" height="3" fill="none" stroke="#6E6E6E" stroke-width="1.2"/>
<rect x="1314" y="480.7" width="5" height="3" fill="#6E6E6E"/>
</svg>
<div class="a" style="left:0px;top:659px;width:1354px;height:1px;background:#A0A0A0;"></div>
<div class="a" style="left:101px;top:660px;width:63px;height:22px;background:#C8C8C8;"></div>
<span class="t" style="left:48px;top:666.69px;font-size:11px;line-height:11px;transform:scaleX(1.0633);transform-origin:0 0;">Terminal</span>
<span class="t" style="left:128px;top:666.69px;font-size:11px;line-height:11px;transform:scaleX(1.1652);transform-origin:0 0;">Build</span>
<span class="t" style="left:192px;top:666.69px;font-size:11px;line-height:11px;"><u>6</u>: Logcat</span>
<span class="t" style="left:275px;top:666.69px;font-size:11px;line-height:11px;">TODO</span>
<span class="t" style="left:1272px;top:666.69px;font-size:11px;line-height:11px;">Event Log</span>
<svg width="300" height="24" style="left:0;top:659px" viewBox="0 659 300 24">
<rect x="32" y="665.8" width="11" height="11" fill="#7A7A7A"/>
<rect x="33.3" y="668" width="8.4" height="7.5" fill="#A6A6A6"/>
<path d="M34.5 669.6 l2.2 1.6 l-2.2 1.6 M37.5 673.8 h2.8" stroke="#FFFFFF" stroke-width="0.9" fill="none"/>
<path d="M113.2 664.5 v11 M110.3 673 L113.2 677.5 L116.1 673" stroke="#4CAF3E" stroke-width="1.9" fill="none"/>
<text x="118" y="670.3" font-family="Liberation Sans" font-weight="700" font-size="6" fill="#777">01</text>
<text x="118" y="676.3" font-family="Liberation Sans" font-weight="700" font-size="6" fill="#777">10</text>
<path d="M176 668.8 h11 M176 671.9 h7 M176 674.9 h9" stroke="#555" stroke-width="1.4"/>
<path d="M262.5 670 Q262.5 666 267 666 Q271.5 666 271.5 670 Z" fill="#7A7A7A"/>
<rect x="263" y="669.5" width="8" height="6.8" rx="2" fill="#F0C27E"/>
<rect x="263" y="669" width="8" height="1.5" fill="#7A7A7A"/>
<circle cx="265.4" cy="672.4" r="0.55" fill="#555"/><circle cx="268.6" cy="672.4" r="0.55" fill="#555"/>
<rect x="264" y="676" width="6.5" height="2.5" fill="#3A8FD5"/>
<circle cx="261.3" cy="667.2" r="3" fill="#FFFFFF" stroke="#6E6E6E" stroke-width="1"/>
<path d="M259.8 666.5 h3 M259.8 668 h3" stroke="#6E6E6E" stroke-width="0.7"/>
</svg>
<svg width="30" height="24" style="left:1248px;top:659px" viewBox="1248 659 30 24">
<circle cx="1259.5" cy="670.5" r="7" fill="#E07868"/>
<path d="M1261 675.5 l6.5 3 l-2.5 -5.5z" fill="#E07868"/>
<text x="1259.5" y="675" text-anchor="middle" font-family="Liberation Sans" font-size="10" fill="#fff">2</text>
</svg>
<div class="a" style="left:0px;top:682px;width:1354px;height:1px;background:#A0A0A0;"></div>
<span class="t" style="left:31px;top:687.84px;font-size:12px;line-height:12px;transform:scaleX(0.9906);transform-origin:0 0;">Gradle build finished in 8s 437ms (moments ago)</span>
<span class="t" style="left:1165px;top:687.84px;font-size:12px;line-height:12px;color:#999999;">Context: &lt;no context&gt;</span>
<svg width="30" height="20" style="left:0;top:683px" viewBox="0 683 30 20">
<rect x="9.5" y="687.5" width="13" height="11" fill="#F8F8F8" stroke="#606060" stroke-width="1"/>
<rect x="11" y="689" width="10" height="8" fill="#C4C4C4"/>
<rect x="9" y="700" width="14" height="1" fill="#606060"/>
</svg>
<svg width="50" height="20" style="left:1305px;top:683px" viewBox="1305 683 50 20">
<path d="M1312 693 v-1.8 q0 -2 2 -2 q2 0 2 2 v0.8" stroke="#6E6E6E" stroke-width="1.1" fill="none"/>
<rect x="1313.5" y="692.5" width="7" height="6" rx="1" fill="#6E6E6E"/>
<path d="M1315.5 694.5 h3 M1317 694.5 v2.8" stroke="#F2F2F2" stroke-width="0.9"/>
<path d="M1335.5 692.5 q0 -5 4 -5 q4 0 4 5z" fill="#BEBEBE"/>
<rect x="1333" y="692" width="13" height="1.5" fill="#BEBEBE"/>
<path d="M1335 694.5 h9 v3 l-1.2 1 v2 h-6.6 v-2 l-1.2 -1z" fill="#BEBEBE"/>
</svg>
</body></html>
